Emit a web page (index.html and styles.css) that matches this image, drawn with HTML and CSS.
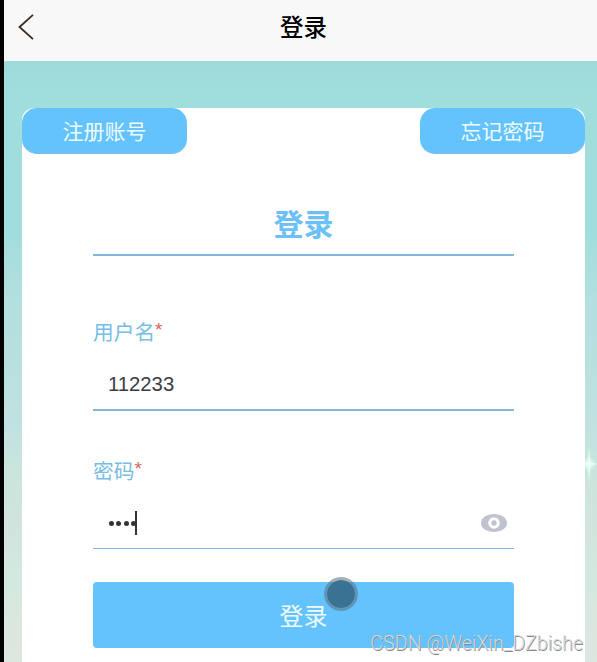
FILE: index.html
```html
<!DOCTYPE html>
<html lang="zh-CN">
<head>
<meta charset="UTF-8">
<title>登录</title>
<link rel="stylesheet" href="styles.css">
</head>
<body>
<header class="navbar">
  <svg class="back" viewBox="0 0 16 26" aria-hidden="true"><path d="M15 .8 1.5 13 15 25.2"/></svg>
  <h1 class="nav-title">登录</h1>
</header>
<main class="page">
  <svg class="sparkle" viewBox="0 0 24 36" aria-hidden="true">
    <defs><radialGradient id="glow"><stop offset="0" stop-color="#f2fffb"/><stop offset=".4" stop-color="#eafff9" stop-opacity=".75"/><stop offset="1" stop-color="#e0fff5" stop-opacity="0"/></radialGradient></defs>
    <ellipse cx="12" cy="18" rx="2" ry="18" fill="url(#glow)"/>
    <ellipse cx="12" cy="18" rx="12" ry="2" fill="url(#glow)"/>
    <circle cx="12" cy="18" r="7" fill="url(#glow)"/>
  </svg>
  <section class="card">
    <nav class="links">
      <a class="link">注册账号</a>
      <a class="link">忘记密码</a>
    </nav>
    <form class="form">
      <h2 class="form-title">登录</h2>
      <div class="field">
        <div class="label">用户名<span class="required">*</span></div>
        <div class="control">112233</div>
      </div>
      <div class="field password">
        <div class="label">密码<span class="required">*</span></div>
        <div class="control">
          <span class="dots"><i></i><i></i><i></i><i></i></span><span class="caret"></span>
          <svg class="eye" viewBox="0 0 26 18" aria-hidden="true"><path fill-rule="evenodd" d="M13 0C6 0 0 3.500 0 9s6 9 13 9s13-3.500 13-9S20 0 13 0Zm0 3.200a5.800 5.800 0 1 1 0 11.600a5.800 5.800 0 1 1 0-11.600Z"/><circle cx="13" cy="9" r="2.700"/></svg>
        </div>
      </div>
      <button class="submit" type="button">登录<span class="pointer"></span></button>
    </form>
  </section>
</main>
<div class="watermark">CSDN @WeiXin_DZbishe</div>
</body>
</html>
```

FILE: styles.css
```css
* { box-sizing: border-box; }

body {
  margin: 0;
  height: 662px;
  position: relative;
  overflow: hidden;
  display: flex;
  flex-direction: column;
  border-left: 4px solid #000;
  font-family: "Liberation Sans", "Noto Sans CJK SC", sans-serif;
}

.navbar {
  flex: none;
  height: 61px;
  padding: 0 14px;
  display: grid;
  grid-template-columns: 40px 1fr 40px;
  align-items: center;
  background: #f8f8f8;
}

.back {
  width: 16px;
  height: 26px;
  margin-bottom: 8px;
  fill: none;
  stroke: #3a2a20;
  stroke-width: 1.8;
}

.nav-title {
  margin: 0 0 5px 6px;
  font-size: 23.5px;
  line-height: 34px;
  font-weight: 500;
  text-align: center;
  color: #000;
}

.page {
  position: relative;
  flex: 1;
  min-height: 0;
  padding: 47px 12px 0 18px;
  background: linear-gradient(#9fdada 0, #a0dddd 25px, #a1dddd 170px, #b2dfdf 235px, #b9e0df 310px, #c1e1e1 365px, #c8e5dd 400px, #d0e4dc 460px, #d4e9de 530px, #dee5df 580px, #dbe7df 601px);
}

.sparkle {
  position: absolute;
  right: -4px;
  top: 385px;
  width: 24px;
  height: 36px;
}

.card {
  position: relative;
  height: 100%;
  background: #fff;
  border-radius: 12px 12px 0 0;
}

.links {
  display: flex;
  justify-content: space-between;
}

.link {
  width: 165px;
  height: 46px;
  border-radius: 15px;
  border-bottom: 1px solid #83b9dc;
  background: #64c3fd;
  color: #effcff;
  font-size: 21px;
  line-height: 48px;
  text-align: center;
}

.form { padding: 46px 71px 0; }

.form-title {
  margin: 0;
  height: 56px;
  border-bottom: 2px solid #83b7d7;
  color: #6bc0f8;
  font-size: 30px;
  line-height: 50px;
  text-align: center;
}

.field {
  margin-top: 60px;
}

.label {
  height: 34px;
  color: #78bde5;
  font-size: 20.7px;
  line-height: 34px;
}

.required {
  color: #cf6760;
  font-size: 19px;
  vertical-align: 4px;
  line-height: 1;
}

.control {
  height: 61px;
  padding: 8px 0 0 15px;
  display: flex;
  align-items: center;
  border-bottom: 2px solid #7ebada;
  color: #3c3b43;
  font-size: 20.3px;
  line-height: 24px;
}

.password { margin-top: 44px; }
.password .control { height: 60px; padding-top: 9px; border-bottom-width: 1px; }

.dots {
  display: flex;
  gap: 2.3px;
  padding-left: 1px;
}

.dots i {
  width: 5px;
  height: 5px;
  border-radius: 50%;
  background: #30343a;
}

.caret {
  width: 2px;
  height: 24px;
  margin-left: -1px;
  margin-top: -1px;
  background: #333;
}

.eye {
  width: 26px;
  height: 18px;
  margin: 0 7px 0 auto;
  fill: #bec3cf;
}

.submit {
  position: relative;
  display: block;
  width: 100%;
  height: 66px;
  margin-top: 33px;
  padding: 0;
  border: 0;
  border-radius: 4px;
  background: #64c3fd;
  color: #effcff;
  font: 24px/70px "Liberation Sans", "Noto Sans CJK SC", sans-serif;
}

.pointer {
  position: absolute;
  left: 231px;
  top: -5px;
  width: 34px;
  height: 34px;
  border: 3px solid rgba(92, 112, 128, .55);
  border-radius: 50%;
  background: #3a7294;
  background-clip: padding-box;
}

.watermark {
  position: absolute;
  right: 14px;
  bottom: 5px;
  color: #d6d9db;
  font: 300 19.7px/26px Roboto, "Liberation Sans", sans-serif;
  text-shadow: .8px .8px .5px #888;
  white-space: nowrap;
}
```
